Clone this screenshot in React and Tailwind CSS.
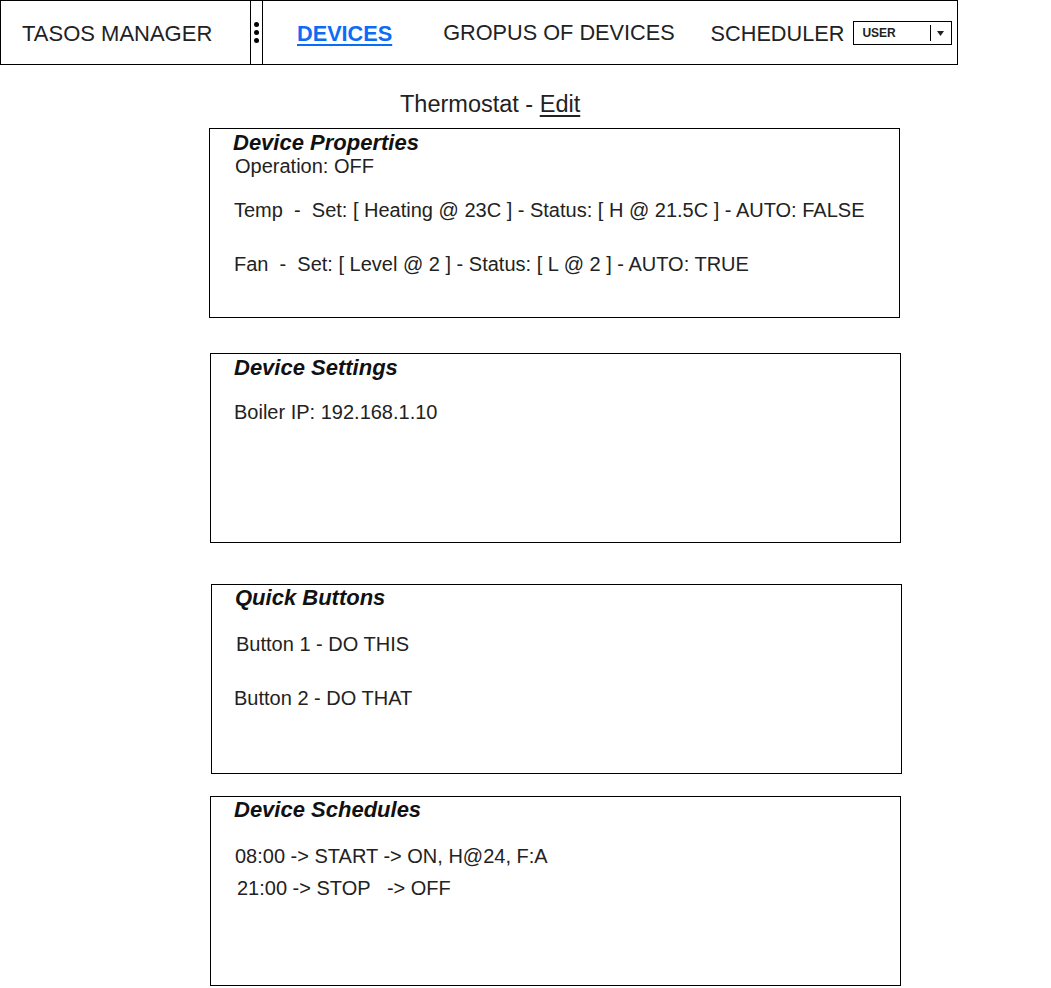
const font = { fontFamily: '"Liberation Sans", Arial, sans-serif' };

const Panel = ({ className, title, titleTop, children }) => (
  <div className={`w-[691px] h-[190px] border border-black ${className}`}>
    <div className={`pl-[23px] text-[22px] leading-[22px] font-bold italic text-[#111] ${titleTop}`}>{title}</div>
    {children}
  </div>
);

const Line = ({ className, children }) => (
  <div className={`text-[20px] leading-[23px] text-[#222] whitespace-pre ${className}`}>{children}</div>
);

export default function App() {
  return (
    <div className="w-[1051px] min-h-[988px] bg-white" style={font}>
      {/* Top bar */}
      <header className="w-[958px] h-[65px] border border-black flex items-stretch">
        <div className="w-[250px] border-r border-black flex items-center pl-[21px] pt-[1px] text-[22px] text-[#222]">
          TASOS MANAGER
        </div>
        <div className="w-[12px] border-r border-black flex flex-col items-center justify-center gap-[3px]">
          <span className="w-[5px] h-[5px] rounded-full bg-black" />
          <span className="w-[5px] h-[5px] rounded-full bg-black" />
          <span className="w-[5px] h-[5px] rounded-full bg-black" />
        </div>
        <nav className="flex items-center text-[21.7px] text-[#222]">
          <a className="ml-[34px] mt-[3px] font-bold text-[#0b6cf5] underline underline-offset-[3px]">DEVICES</a>
          <span className="ml-[51px] mt-[1px]">GROPUS OF DEVICES</span>
          <span className="ml-[36px] mt-[4px]">SCHEDULER</span>
          <div className="ml-[9px] w-[99px] h-[24px] border border-black flex items-center">
            <span className="pl-[8px] text-[12px] font-bold flex-1">USER</span>
            <span className="h-[16px] border-l border-black" />
            <svg className="w-[20px] h-[10px]" viewBox="0 0 20 10">
              <path d="M6 3h7l-3.5 5z" fill="#222" />
            </svg>
          </div>
        </nav>
      </header>

      {/* Page title */}
      <div className="ml-[400px] mt-[26px] text-[23.5px] leading-[27px] text-[#222]">
        Thermostat - <span className="underline underline-offset-[3px]">Edit</span>
      </div>

      <Panel className="ml-[209px] mt-[10px]" title="Device Properties" titleTop="pt-[3px]">
        <Line className="pl-[25px] mt-[1px]">Operation: OFF</Line>
        <Line className="pl-[24px] mt-[21px]">Temp  -  Set: [ Heating @ 23C ] - Status: [ H @ 21.5C ] - AUTO: FALSE</Line>
        <Line className="pl-[24px] mt-[31px]">Fan  -  Set: [ Level @ 2 ] - Status: [ L @ 2 ] - AUTO: TRUE</Line>
      </Panel>

      <Panel className="ml-[210px] mt-[35px]" title="Device Settings" titleTop="pt-[3px]">
        <Line className="pl-[23px] mt-[22px]">Boiler IP: 192.168.1.10</Line>
      </Panel>

      <Panel className="ml-[211px] mt-[41px]" title="Quick Buttons" titleTop="pt-[2px]">
        <Line className="pl-[24px] mt-[24px]">Button 1 - DO THIS</Line>
        <Line className="pl-[22px] mt-[31px]">Button 2 - DO THAT</Line>
      </Panel>

      <Panel className="ml-[210px] mt-[22px]" title="Device Schedules" titleTop="pt-[2px]">
        <Line className="pl-[24px] mt-[24px]">08:00 -&gt; START -&gt; ON, H@24, F:A</Line>
        <Line className="pl-[26px] mt-[9px]">21:00 -&gt; STOP   -&gt; OFF</Line>
      </Panel>
    </div>
  );
}
